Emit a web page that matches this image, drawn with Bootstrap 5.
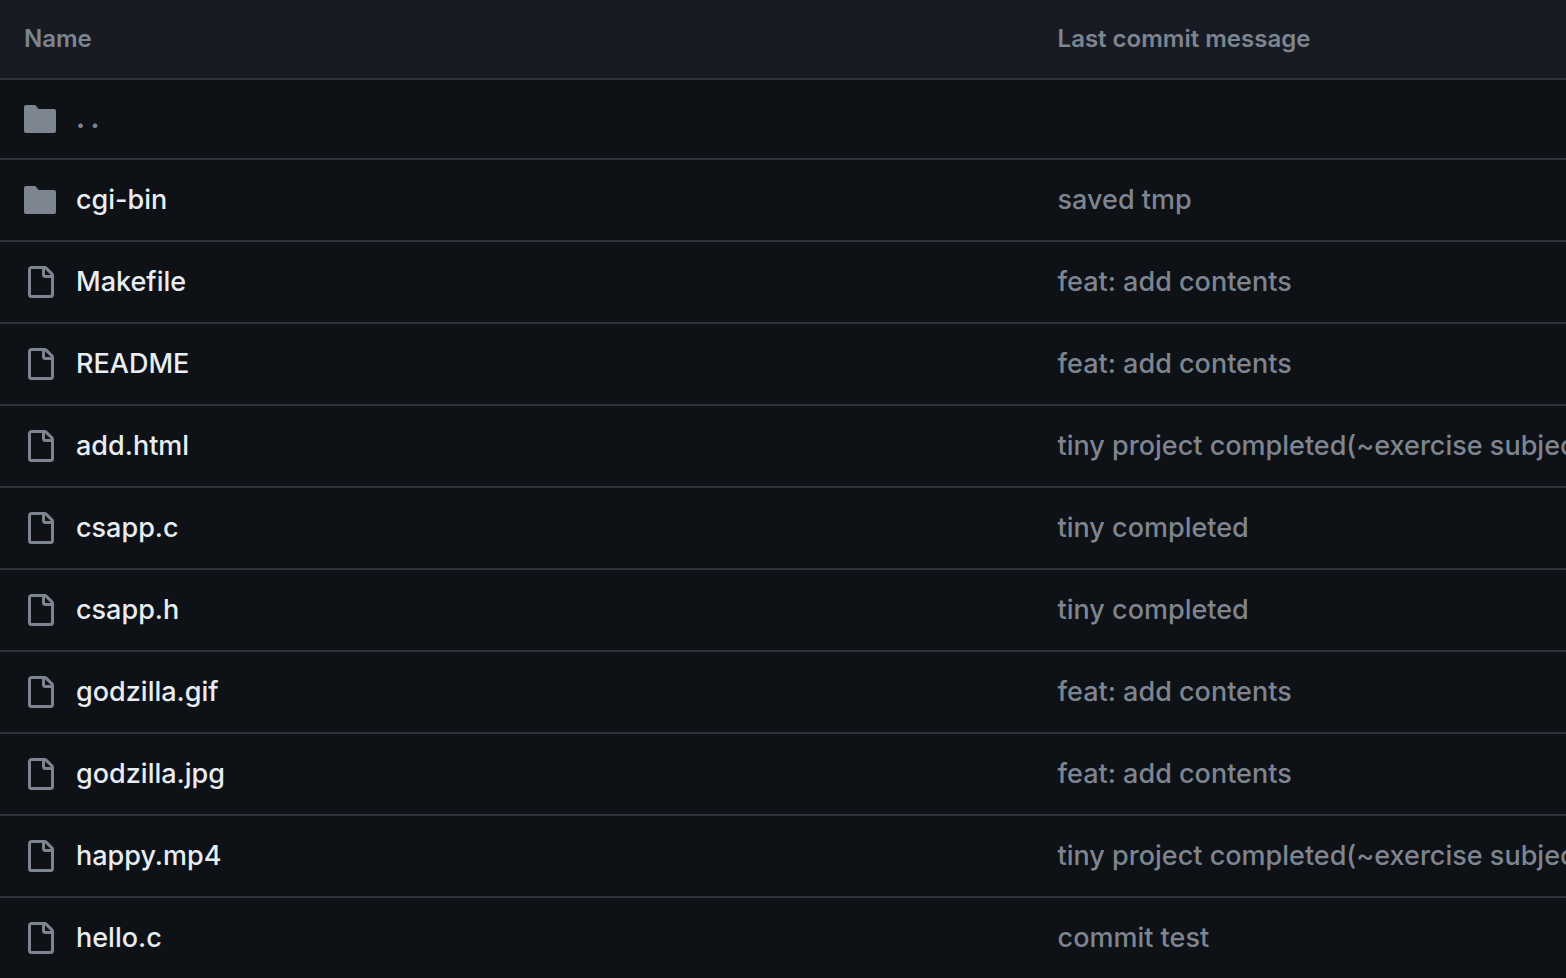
<!DOCTYPE html>
<html lang="en" data-bs-theme="dark">
<head>
<meta charset="utf-8">
<meta name="viewport" content="width=device-width, initial-scale=1">
<title>Files</title>
<link href="https://cdn.jsdelivr.net/npm/bootstrap@5.3.0/dist/css/bootstrap.min.css" rel="stylesheet">
<style>
body{background:#0e1116;font-family:Inter,"Liberation Sans",sans-serif;overflow-x:hidden}
.files{table-layout:fixed;border-collapse:separate;border-spacing:0;font-size:27px;font-weight:450;line-height:40px}
.files th,.files td{padding:20px 24px;border-bottom:2px solid #30343a;white-space:nowrap}
.files thead th{background:#181b23;color:#7d8590;font-size:24px;font-weight:600;line-height:38px}
.files .parent td{padding-top:19px;padding-bottom:19px}
.files tbody td{color:#7d8590}
.files .col-msg{width:34%}
.files a{color:#e6edf3}
.files .parent a{color:#7d8590;font-weight:700}
.files svg{width:32px;height:32px;fill:#7d8590;flex:none}
.entry{gap:20px}
</style>
</head>
<body>
<svg class="d-none" aria-hidden="true">
<symbol id="dir" viewBox="0 0 16 16"><path d="M1 1h3.9c.55 0 1.07.26 1.4.7l.9 1.2c.05.06.12.1.2.1H15a1 1 0 0 1 1 1v10a1 1 0 0 1-1 1H1a1 1 0 0 1-1-1V2a1 1 0 0 1 1-1Z"/></symbol>
<symbol id="file" viewBox="0 0 16 16"><path d="M2 1.75C2 .784 2.784 0 3.75 0h6.586c.464 0 .909.184 1.237.513l2.914 2.914c.329.328.513.773.513 1.237v9.586A1.75 1.75 0 0 1 13.25 16h-9.5A1.75 1.75 0 0 1 2 14.25Zm1.75-.25a.25.25 0 0 0-.25.25v12.5c0 .138.112.25.25.25h9.5a.25.25 0 0 0 .25-.25V6h-2.75A1.75 1.75 0 0 1 9 4.25V1.5Zm6.75.062V4.25c0 .138.112.25.25.25h2.688l-.011-.013-2.914-2.914-.013-.011Z"/></symbol>
</svg>
<main class="overflow-hidden">
<table class="files w-100 text-start">
<colgroup><col><col class="col-msg"></colgroup>
<thead><tr><th scope="col">Name</th><th scope="col">Last commit message</th></tr></thead>
<tbody>
<tr class="parent"><td><div class="entry d-flex align-items-center"><svg aria-hidden="true"><use href="#dir"/></svg><a class="text-decoration-none" href="#">. .</a></div></td><td></td></tr>
<tr><td><div class="entry d-flex align-items-center"><svg aria-hidden="true"><use href="#dir"/></svg><a class="text-decoration-none" href="#">cgi-bin</a></div></td><td>saved tmp</td></tr>
<tr><td><div class="entry d-flex align-items-center"><svg aria-hidden="true"><use href="#file"/></svg><a class="text-decoration-none" href="#">Makefile</a></div></td><td>feat: add contents</td></tr>
<tr><td><div class="entry d-flex align-items-center"><svg aria-hidden="true"><use href="#file"/></svg><a class="text-decoration-none" href="#">README</a></div></td><td>feat: add contents</td></tr>
<tr><td><div class="entry d-flex align-items-center"><svg aria-hidden="true"><use href="#file"/></svg><a class="text-decoration-none" href="#">add.html</a></div></td><td>tiny project completed(~exercise subjec</td></tr>
<tr><td><div class="entry d-flex align-items-center"><svg aria-hidden="true"><use href="#file"/></svg><a class="text-decoration-none" href="#">csapp.c</a></div></td><td>tiny completed</td></tr>
<tr><td><div class="entry d-flex align-items-center"><svg aria-hidden="true"><use href="#file"/></svg><a class="text-decoration-none" href="#">csapp.h</a></div></td><td>tiny completed</td></tr>
<tr><td><div class="entry d-flex align-items-center"><svg aria-hidden="true"><use href="#file"/></svg><a class="text-decoration-none" href="#">godzilla.gif</a></div></td><td>feat: add contents</td></tr>
<tr><td><div class="entry d-flex align-items-center"><svg aria-hidden="true"><use href="#file"/></svg><a class="text-decoration-none" href="#">godzilla.jpg</a></div></td><td>feat: add contents</td></tr>
<tr><td><div class="entry d-flex align-items-center"><svg aria-hidden="true"><use href="#file"/></svg><a class="text-decoration-none" href="#">happy.mp4</a></div></td><td>tiny project completed(~exercise subjec</td></tr>
<tr><td><div class="entry d-flex align-items-center"><svg aria-hidden="true"><use href="#file"/></svg><a class="text-decoration-none" href="#">hello.c</a></div></td><td>commit test</td></tr>
</tbody>
</table>
</main>
<script src="https://cdn.jsdelivr.net/npm/bootstrap@5.3.0/dist/js/bootstrap.bundle.min.js"></script>
</body>
</html>
